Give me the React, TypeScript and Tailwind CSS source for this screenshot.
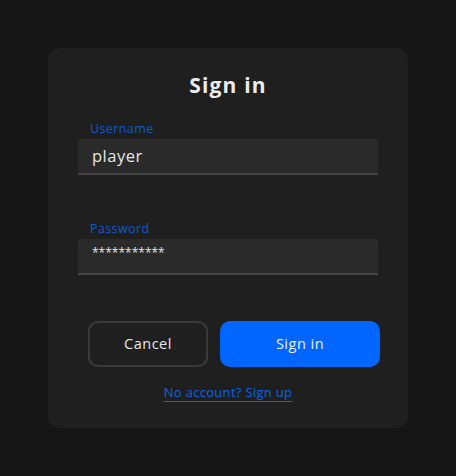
export default function App() {
  return (
    <div
      className="min-h-screen w-full bg-[#161616] flex justify-center pt-12"
      style={{ fontFamily: '"Open Sans", "Liberation Sans", sans-serif' }}
    >
      <div className="w-[360px] h-[380px] bg-[#1f1f1f] rounded-xl flex flex-col items-center">
        <h1 className="mt-[22px] h-[30px] text-[21px] font-bold text-[#ececec] tracking-[1.2px] leading-[30px]">
          Sign in
        </h1>

        <div className="mt-[20px] w-[300px]">
          <label className="block pl-3 text-[12.5px] leading-[17px] text-[#0b5ad0] tracking-[0.4px]">
            Username
          </label>
          <div className="mt-[2px] h-[36px] bg-[#2a2a2a] rounded-t border-b-2 border-[#444444] flex items-center px-[14px]">
            <span className="text-[16.5px] text-[#e6e6e6] tracking-[0.5px]">player</span>
          </div>
        </div>

        <div className="mt-[45px] w-[300px]">
          <label className="block pl-3 text-[12.5px] leading-[17px] text-[#0b5ad0] tracking-[0.4px]">
            Password
          </label>
          <div className="mt-[2px] h-[36px] bg-[#2a2a2a] rounded-t border-b-2 border-[#444444] flex items-start pt-[5px] px-[14px]">
            <span className="text-[12px] text-[#e6e6e6]">***********</span>
          </div>
        </div>

        <div className="mt-[46px] self-start ml-[40px] flex gap-3">
          <button className="w-[120px] h-[46px] rounded-[10px] border-2 border-[#3a3a3a] text-[14.5px] text-[#e6e6e6] tracking-[0.5px]">
            Cancel
          </button>
          <button className="w-[160px] h-[46px] rounded-[10px] bg-[#0066ff] text-[14.5px] text-[#f0f0f0] tracking-[0.5px]">
            Sign in
          </button>
        </div>

        <a className="mt-[16px] text-[13px] text-[#0a63e0] tracking-[0.3px] underline underline-offset-4 decoration-[#0a63e0]">
          No account? Sign up
        </a>
      </div>
    </div>
  );
}
